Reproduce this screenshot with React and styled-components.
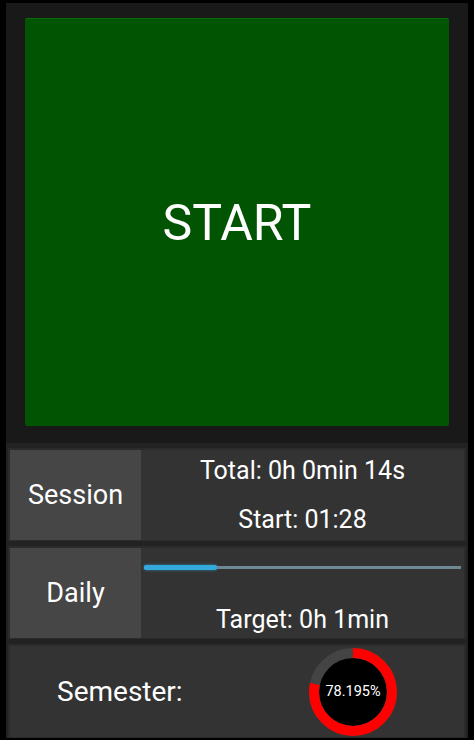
import React from "react";
import styled, { createGlobalStyle } from "styled-components";

const Global = createGlobalStyle`
  html, body { margin: 0; padding: 0; background: #000; }
  body { font-family: Roboto, "Noto Sans", sans-serif; color: #fff; }
`;

const Screen = styled.div`
  width: 474px;
  height: 740px;
  box-sizing: border-box;
  padding: 3px 6px 2px 6px;
  display: flex;
`;

const Frame = styled.div`
  flex: 1;
  display: flex;
  flex-direction: column;
  background: #222;
`;

const StartPanel = styled.div`
  height: 440px;
  box-sizing: border-box;
  background: #191919;
  padding: 15px 19px 17px 19px;
  display: flex;
`;

const StartButton = styled.button`
  flex: 1;
  border: none;
  border-top: 1px solid #0a6a0a;
  border-radius: 2px;
  background: #015401;
  color: #fff;
  font-family: Roboto, sans-serif;
  font-size: 50px;
  padding: 0;
  cursor: pointer;
`;

const Rows = styled.div`
  flex: 1;
  display: flex;
  flex-direction: column;
  gap: 5px;
  padding: 5px 2px 0 2px;
`;

const Row = styled.div`
  height: ${(p) => p.$h}px;
  box-sizing: border-box;
  background: #333;
  border: 2px solid #2b2b2b;
  border-bottom-width: 1px;
  display: flex;
`;

const Label = styled.div`
  width: 131px;
  background: #464646;
  display: flex;
  align-items: center;
  justify-content: center;
  font-size: 27px;
`;

const Info = styled.div`
  flex: 1;
  display: flex;
  flex-direction: column;
  align-items: center;
  justify-content: ${(p) => p.$justify || "center"};
  gap: ${(p) => p.$gap || 0}px;
  padding: ${(p) => p.$pad || "0"};
  font-size: 25px;
  line-height: 29px;
`;

const Track = styled.div`
  align-self: stretch;
  margin: 0 3px 0 3px;
  height: 3px;
  background: #6e8894;
  position: relative;
`;

const Fill = styled.div`
  position: absolute;
  left: 0;
  top: -1px;
  height: 5px;
  border-radius: 2px;
  background: #33a9dc;
  box-shadow: 0 0 3px rgba(51, 169, 220, 0.7);
`;

const SemesterRow = styled.div`
  flex: 1;
  display: flex;
  align-items: center;
`;

const SemLabel = styled.div`
  width: 224px;
  padding-left: 47px;
  box-sizing: border-box;
  font-size: 28px;
`;

const Donut = styled.div`
  width: 88px;
  height: 88px;
  position: relative;
  display: flex;
  align-items: center;
  justify-content: center;
  margin-left: 75px;
`;

const DonutSvg = styled.svg`
  position: absolute;
  inset: 0;
`;

const DonutText = styled.span`
  position: relative;
  font-size: 14.5px;
  color: #fff;
`;

function Ring({ pct }) {
  const r = 39;
  const c = 2 * Math.PI * r;
  return (
    <Donut>
      <DonutSvg width="88" height="88" viewBox="0 0 88 88">
        <circle cx="44" cy="44" r="34" fill="#000" />
        <circle cx="44" cy="44" r={r} fill="none" stroke="#444" strokeWidth="10" />
        <circle
          cx="44"
          cy="44"
          r={r}
          fill="none"
          stroke="#ff0000"
          strokeWidth="10"
          strokeDasharray={`${(c * pct) / 100} ${c}`}
          transform="rotate(-90 44 44)"
        />
      </DonutSvg>
      <DonutText>{pct}%</DonutText>
    </Donut>
  );
}

export default function App() {
  return (
    <>
      <Global />
      <Screen>
        <Frame>
          <StartPanel>
            <StartButton>START</StartButton>
          </StartPanel>
          <Rows>
            <Row $h={93}>
              <Label>Session</Label>
              <Info $gap={20}>
                <div>Total: 0h 0min 14s</div>
                <div>Start: 01:28</div>
              </Info>
            </Row>
            <Row $h={93}>
              <Label>Daily</Label>
              <Info $justify="space-between" $pad="18px 0 4px 0">
                <Track>
                  <Fill style={{ width: "73px" }} />
                </Track>
                <div>Target: 0h 1min</div>
              </Info>
            </Row>
            <Row $h={94}>
              <SemesterRow>
                <SemLabel>Semester:</SemLabel>
                <Ring pct={78.195} />
              </SemesterRow>
            </Row>
          </Rows>
        </Frame>
      </Screen>
    </>
  );
}
